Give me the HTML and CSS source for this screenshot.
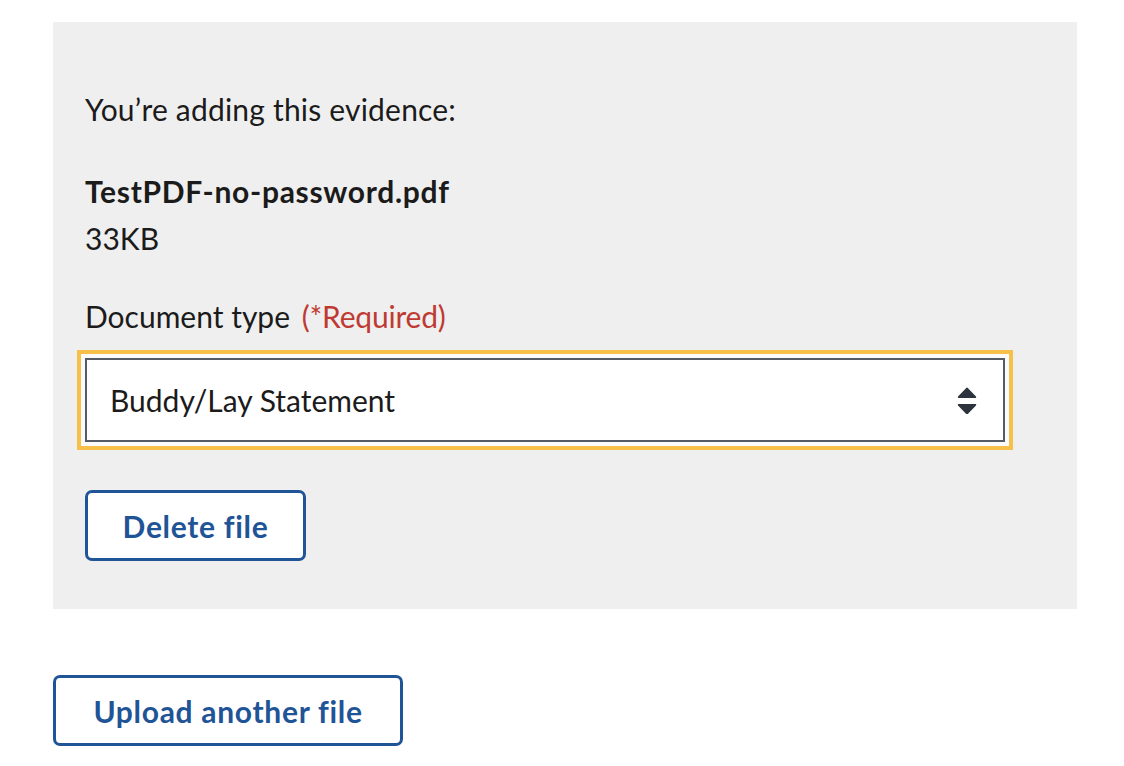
FILE: index.html
```html
<!DOCTYPE html>
<html lang="en">
<head>
<meta charset="utf-8">
<title>Upload evidence</title>
<link rel="stylesheet" href="styles.css">
</head>
<body>
<main class="page">
  <section class="panel">
    <p class="intro">You’re adding this evidence:</p>
    <div class="file-info">
      <p class="file-name">TestPDF-no-password.pdf</p>
      <p class="file-size">33KB</p>
    </div>
    <label class="field-label" for="doctype">Document type <span class="required">(*Required)</span></label>
    <div class="select-wrap">
      <select id="doctype" class="select">
        <option>Buddy/Lay Statement</option>
      </select>
      <svg class="select-arrows" width="20" height="28" viewBox="0 0 20 28" aria-hidden="true">
        <path d="M9 2.2 Q10 1 11 2.2 L19 10.6 Q19.8 12 18.4 12 L1.6 12 Q0.2 12 1 10.6 Z" fill="#2d333c"/>
        <path d="M9 29.8 Q10 31 11 29.8 L19 21.4 Q19.8 20 18.4 20 L1.6 20 Q0.2 20 1 21.4 Z" fill="#2d333c" transform="translate(0 -2)"/>
      </svg>
    </div>
    <button class="btn btn-delete" type="button">Delete file</button>
  </section>
  <button class="btn btn-upload" type="button">Upload another file</button>
</main>
</body>
</html>
```
FILE: styles.css
```css
* { box-sizing: border-box; }
html, body { margin: 0; padding: 0; background: #ffffff; }
body {
  font-family: "Lato", "Source Sans Pro", "Noto Sans", sans-serif;
  color: #1b1b1b;
  font-size: 30px;
}
.page {
  padding: 22px 47px 20px 53px;
  display: flex;
  flex-direction: column;
  align-items: flex-start;
}
.panel {
  width: 1024px;
  background: #efefef;
  padding: 65px 32px 48px;
  display: flex;
  flex-direction: column;
  align-items: flex-start;
}
p { margin: 0; }
.intro { line-height: 45px; letter-spacing: 0.2px; }
.file-info { margin-top: 36px; line-height: 47px; }
.file-name { font-weight: 700; letter-spacing: 0.7px; }
.field-label { margin-top: 32px; line-height: 45px; }
.required { color: #bf3a32; margin-left: 4px; letter-spacing: -0.2px; }
.select-wrap {
  position: relative;
  margin-top: 19px;
  width: 920px;
}
.select {
  -webkit-appearance: none;
  appearance: none;
  display: block;
  width: 920px;
  height: 84px;
  border: 2px solid #565c65;
  border-radius: 0;
  background: #ffffff;
  font-family: inherit;
  font-size: 30px;
  color: #1b1b1b;
  padding: 0 60px 0 23px;
  box-shadow: 0 0 0 4px #fbfbfb;
  outline: 4px solid #f6c04a;
  outline-offset: 4px;
}
.select-arrows {
  position: absolute;
  right: 28px;
  top: 28px;
  pointer-events: none;
}
.btn {
  font-family: inherit;
  font-weight: 700;
  font-size: 30px;
  letter-spacing: 0.7px;
  color: #1f5496;
  background: #ffffff;
  border: 3px solid #1f5496;
  border-radius: 7px;
  height: 71px;
  padding: 0 30px;
  cursor: pointer;
}
.btn-delete { margin-top: 48px; width: 221px; }
.btn-upload { margin-top: 66px; width: 350px; }
```
